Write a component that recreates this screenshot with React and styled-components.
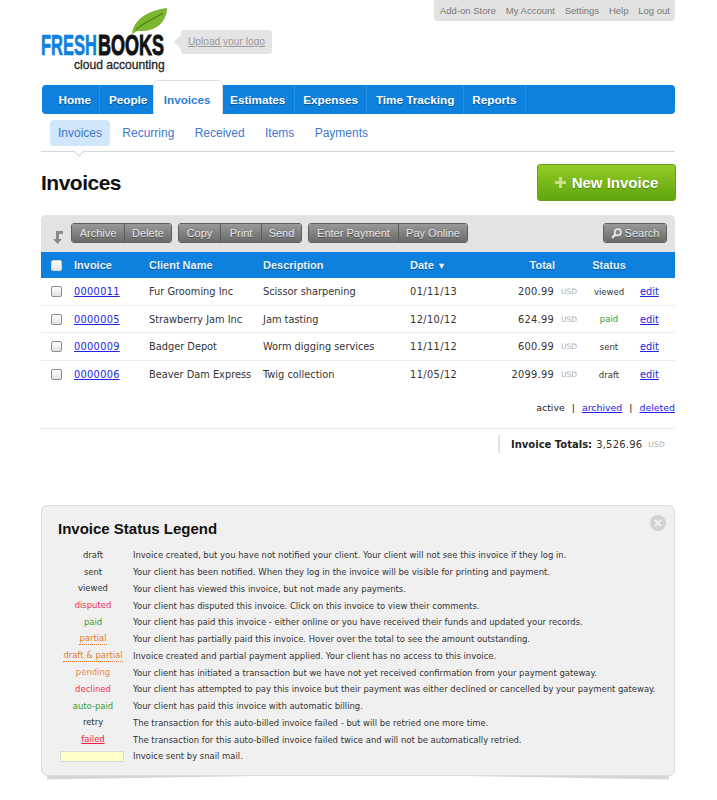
import React from "react";
import styled, { createGlobalStyle } from "styled-components";

const GlobalStyle = createGlobalStyle`
  html, body {
    margin: 0;
    padding: 0;
    background: #fff;
    color: #333;
    font-family: "DejaVu Sans", Verdana, sans-serif;
  }
`;

const Page = styled.div`
  position: relative;
  z-index: 0;
  width: 634px;
  margin-left: 41px;
  padding-bottom: 24px;
`;

// === 상단 ===
const Masthead = styled.header`
  display: flex;
  justify-content: space-between;
  align-items: flex-start;
  height: 81px;
`;

const Brand = styled.div`
  display: flex;
  align-items: flex-start;
  padding-top: 8px;
`;

const UploadTag = styled.a`
  position: relative;
  margin: 22px 0 0 14px;
  width: 91px;
  height: 24px;
  text-align: center;
  background: #e4e4e4;
  border-radius: 3px;
  color: #999;
  font: 10.2px/24px "Liberation Sans", Arial, sans-serif;
  text-decoration: underline;

  &:before {
    content: "";
    position: absolute;
    left: -7px;
    top: 5px;
    border-style: solid;
    border-width: 7px 7px 7px 0;
    border-color: transparent #e4e4e4 transparent transparent;
  }
`;

const TopLinks = styled.nav`
  display: flex;
  width: 241px;
  height: 21px;
  box-sizing: border-box;
  justify-content: space-between;
  align-items: center;
  padding: 0 5px 1px 6px;
  background: #e2e2e2;
  border-radius: 0 0 4px 4px;
`;

const TopLink = styled.a`
  font: 9.5px "Liberation Sans", Arial, sans-serif;
  color: #777;
`;

const NavBar = styled.nav`
  display: flex;
  height: 29px;
  margin-top: 4px;
  margin-left: 1px;
  padding-left: 8px;
  background: #0e80dd;
  border-radius: 4px;
`;

const NavTab = styled.a`
  display: block;
  box-sizing: border-box;
  padding: 0 ${(p) => (p.$active ? "10px" : "8.5px")};
  border-right: 1px solid ${(p) => (p.$plain ? "transparent" : "#2b8fe2")};
  color: ${(p) => (p.$active ? "#2f7fd4" : "#fff")};
  background: ${(p) => (p.$active ? "#fff" : "transparent")};
  height: ${(p) => (p.$active ? "33px" : "29px")};
  margin: ${(p) => (p.$active ? "-4px 0 0 -3px" : "0")};
  border-radius: ${(p) => (p.$active ? "4px 4px 0 0" : "0")};
  box-shadow: ${(p) => (p.$active ? "0 -1px 0 #ddd, 1px 0 0 #ddd, -1px 0 0 #ddd" : "none")};
  font: bold 11.7px "Liberation Sans", Arial, sans-serif;
  line-height: ${(p) => (p.$active ? "37px" : "29px")};
  text-shadow: ${(p) => (p.$active ? "none" : "0 1px 1px rgba(0, 0, 0, 0.35)")};
`;

const SubNav = styled.nav`
  position: relative;
  display: flex;
  gap: 4.3px;
  margin-top: 6px;
  padding: 0 0 5px 9px;
  border-bottom: 1px solid #d6d6d6;

  &:after {
    content: "";
    position: absolute;
    left: 34px;
    bottom: -4px;
    width: 7px;
    height: 7px;
    background: #fff;
    border-right: 1px solid #d6d6d6;
    border-bottom: 1px solid #d6d6d6;
    transform: rotate(45deg);
  }
`;

const SubLink = styled.a`
  height: 26px;
  padding: 0 8px;
  border-radius: 4px;
  background: ${(p) => (p.$active ? "#cfe6fb" : "transparent")};
  color: #3f78d0;
  font: 12px/26px "Liberation Sans", Arial, sans-serif;
`;

const TitleRow = styled.div`
  display: flex;
  justify-content: space-between;
  align-items: center;
  padding: 12px 0 14px;
`;

const Title = styled.h1`
  margin: 0;
  font: bold 21px "Liberation Sans", Arial, sans-serif;
  letter-spacing: -0.5px;
  color: #111;
`;

const NewButton = styled.button`
  display: flex;
  align-items: center;
  justify-content: center;
  gap: 6px;
  width: 139px;
  height: 37px;
  margin-right: -1px;
  padding: 0;
  border: 1px solid #64a318;
  border-radius: 3px;
  background: linear-gradient(#93cb25, #60a50f);
  color: #fff;
  font: bold 15px "Liberation Sans", Arial, sans-serif;
  text-shadow: 0 1px 1px rgba(0, 0, 0, 0.3);
`;

// === 툴바 ===
const Toolbar = styled.div`
  display: flex;
  align-items: flex-start;
  height: 37px;
  box-sizing: border-box;
  padding: 8px 8px 0 12px;
  background: #e3e3e3;
  border-radius: 5px 5px 0 0;
`;

const SortIcon = styled.svg`
  width: 10px;
  height: 13px;
  margin: 8px 8px 0 0;
`;

const ButtonGroup = styled.div`
  display: flex;
  height: 18px;
  margin-right: ${(p) => (p.$end ? "0" : "6px")};
  border: 1px solid #5e5e5e;
  border-radius: 3px;
  overflow: hidden;
`;

const ToolButton = styled.button`
  display: flex;
  align-items: center;
  gap: 3px;
  width: ${(p) => p.$w}px;
  padding: 0;
  justify-content: center;
  border: 0;
  border-left: ${(p) => (p.$first ? "0" : "1px solid #5c5c5c")};
  background: linear-gradient(#999, #6a6a6a);
  color: #e8e8e8;
  font: 11px "Liberation Sans", Arial, sans-serif;
  text-shadow: 0 1px 0 rgba(0, 0, 0, 0.4);
`;

const SearchSlot = styled.div`
  margin-left: auto;
`;

// === 목록 ===
const HeadRow = styled.div`
  display: grid;
  grid-template-columns: 33px 75px 114px 147px 70px 75px 25px 58px 37px;
  align-items: center;
  height: 26px;
  background: #0e80dd;
  color: #e6f2fc;
  font: bold 11px "Liberation Sans", Arial, sans-serif;
  text-shadow: 0 1px 1px rgba(0, 0, 0, 0.3);
`;

const Row = styled.div`
  display: grid;
  grid-template-columns: 33px 75px 114px 147px 70px 75px 25px 58px 37px;
  align-items: center;
  height: 27.5px;
  box-sizing: border-box;
  padding-top: 1px;
  border-bottom: ${(p) => (p.$last ? "0" : "1px solid #ececec")};
  font-size: 9.8px;
  color: #333;
`;

const Check = styled.input.attrs({ type: "checkbox" })`
  appearance: none;
  width: 11px;
  height: 11px;
  margin: 0 0 0 10px;
  border: 1px solid ${(p) => (p.$head ? "#d8d8d8" : "#8c8c8c")};
  border-radius: 2px;
  background: linear-gradient(#fff, #e2e2e2);
`;

const Cell = styled.div`
  white-space: nowrap;
  text-align: ${(p) => p.$align || "left"};
`;

const DateCell = styled(Cell)`
  letter-spacing: 0.4px;
`;

const Num = styled(Cell)`
  text-align: right;
  letter-spacing: ${(p) => (p.$head ? "0" : "0.3px")};
  padding-right: ${(p) => (p.$head ? "0" : "1px")};
`;

const Currency = styled.span`
  padding-left: 6px;
  font-size: 7.5px;
  color: #aaa;
`;

const TextLink = styled.a`
  color: #2323e6;
  text-decoration: underline;
`;

const NumberLink = styled(TextLink)`
  letter-spacing: 0.3px;
`;

const EditCell = styled.div`
  padding-left: 2px;
`;

const Status = styled(Cell)`
  text-align: center;
  font-size: 8.5px;
  color: ${(p) => p.$color || "#333"};
`;

const Filters = styled.div`
  display: flex;
  justify-content: flex-end;
  gap: 7px;
  margin-top: 13px;
  padding-bottom: 14px;
  border-bottom: 1px solid #e6e6e6;
  font-size: 9.4px;
  line-height: 13px;
  color: #222;
`;

const Totals = styled.div`
  display: flex;
  align-items: center;
  height: 18px;
  margin: 6px 8px 0 auto;
  width: 169px;
  box-sizing: border-box;
  padding-left: 11px;
  border-left: 2px solid #e2e2e2;
  font-size: 10px;
  white-space: nowrap;
  letter-spacing: 0.2px;

  strong {
    margin-right: 4px;
    color: #222;
    letter-spacing: 0;
  }
`;

// === 범례 ===
const Legend = styled.section`
  position: relative;
  margin-top: 52px;
  height: 271px;
  box-sizing: border-box;
  padding: 14px 18px 0 16px;
  background: #f0f0f0;
  border: 1px solid #dedede;
  border-radius: 6px;

  &:before,
  &:after {
    content: "";
    position: absolute;
    z-index: -1;
    bottom: -2px;
    width: 300px;
    height: 10px;
    background: #d6d6d6;
  }

  &:before {
    left: 5px;
    transform: rotate(-1deg);
  }

  &:after {
    right: 5px;
    transform: rotate(1deg);
  }
`;

const LegendTitle = styled.h2`
  margin: 0 0 9px;
  font: bold 15px/18px "Liberation Sans", Arial, sans-serif;
  color: #111;
`;

const CloseIcon = styled.svg`
  position: absolute;
  top: 9px;
  right: 8px;
  width: 16px;
  height: 16px;
`;

const LegendRow = styled.div`
  display: grid;
  grid-template-columns: 66px 1fr;
  column-gap: 7px;
  align-items: center;
  margin-left: 2px;
  height: 16.75px;
  font-size: 8.45px;
  color: #333;
  white-space: nowrap;
`;

const LegendLabel = styled.div`
  justify-self: center;
  color: ${(p) => p.$color || "#333"};
  line-height: 11px;
  border-bottom: ${(p) => (p.$dotted ? `1px dotted ${p.$color}` : "0")};
  text-decoration: ${(p) => (p.$under ? "underline" : "none")};
`;

const SnailBox = styled.div`
  width: 62px;
  height: 9px;
  background: #ffffc8;
  border: 1px solid #dcdcdc;
`;

const invoices = [
  { no: "0000011", client: "Fur Grooming Inc", desc: "Scissor sharpening", date: "01/11/13", total: "200.99", status: "viewed" },
  { no: "0000005", client: "Strawberry Jam Inc", desc: "Jam tasting", date: "12/10/12", total: "624.99", status: "paid", color: "#3a9a30" },
  { no: "0000009", client: "Badger Depot", desc: "Worm digging services", date: "11/11/12", total: "600.99", status: "sent" },
  { no: "0000006", client: "Beaver Dam Express", desc: "Twig collection", date: "11/05/12", total: "2099.99", status: "draft" },
];

const legend = [
  { label: "draft", text: "Invoice created, but you have not notified your client. Your client will not see this invoice if they log in." },
  { label: "sent", text: "Your client has been notified. When they log in the invoice will be visible for printing and payment." },
  { label: "viewed", text: "Your client has viewed this invoice, but not made any payments." },
  { label: "disputed", color: "#f0305a", text: "Your client has disputed this invoice. Click on this invoice to view their comments." },
  { label: "paid", color: "#3a9a30", text: "Your client has paid this invoice - either online or you have received their funds and updated your records." },
  { label: "partial", color: "#e07b30", dotted: true, text: "Your client has partially paid this invoice. Hover over the total to see the amount outstanding." },
  { label: "draft & partial", color: "#e07b30", dotted: true, text: "Invoice created and partial payment applied. Your client has no access to this invoice." },
  { label: "pending", color: "#ea8a45", text: "Your client has initiated a transaction but we have not yet received confirmation from your payment gateway." },
  { label: "declined", color: "#f0305a", text: "Your client has attempted to pay this invoice but their payment was either declined or cancelled by your payment gateway." },
  { label: "auto-paid", color: "#3a9a30", text: "Your client has paid this invoice with automatic billing." },
  { label: "retry", text: "The transaction for this auto-billed invoice failed - but will be retried one more time." },
  { label: "failed", color: "#ee2040", under: true, text: "The transaction for this auto-billed invoice failed twice and will not be automatically retried." },
];

const Logo = () => (
  <svg width="126" height="66" viewBox="0 0 126 66">
    <path d="M91 26 C93 11 106 3 126 0 C126 13 116 23 101 23 C97 23 95 23 93 25 Z" fill="#7cb82f" />
    <path d="M95 22 C102 14 112 12 122 5" stroke="#4d7d1a" strokeWidth="1.2" fill="none" />
    <g fontFamily="Liberation Sans, Arial, sans-serif" fontWeight="bold">
      <text transform="translate(0 47) scale(0.55 1)" fontSize="30" fill="#0e80dd" stroke="#0e80dd" strokeWidth="0.7">FRESH</text>
      <text transform="translate(57 47) scale(0.6 1)" fontSize="30" fill="#111" stroke="#111" strokeWidth="1">BOOKS</text>
      <text transform="translate(33 61) scale(0.93 1)" fontSize="13" fill="#222" fontWeight="normal" stroke="#222" strokeWidth="0.3">cloud accounting</text>
    </g>
  </svg>
);

const App = () => (
  <>
    <GlobalStyle />
    <Page>
      <Masthead>
        <Brand>
          <Logo />
          <UploadTag>Upload your logo</UploadTag>
        </Brand>
        <TopLinks>
          {["Add-on Store", "My Account", "Settings", "Help", "Log out"].map((l) => (
            <TopLink key={l}>{l}</TopLink>
          ))}
        </TopLinks>
      </Masthead>

      <NavBar>
        <NavTab>Home</NavTab>
        <NavTab $plain>People</NavTab>
        <NavTab $active $plain>Invoices</NavTab>
        <NavTab>Estimates</NavTab>
        <NavTab>Expenses</NavTab>
        <NavTab>Time Tracking</NavTab>
        <NavTab>Reports</NavTab>
      </NavBar>

      <SubNav>
        <SubLink $active>Invoices</SubLink>
        <SubLink>Recurring</SubLink>
        <SubLink>Received</SubLink>
        <SubLink>Items</SubLink>
        <SubLink>Payments</SubLink>
      </SubNav>

      <TitleRow>
        <Title>Invoices</Title>
        <NewButton>
          <svg width="11" height="11" viewBox="0 0 11 11">
            <path d="M4 0h3v4h4v3H7v4H4V7H0V4h4z" fill="#c6e08c" />
          </svg>
          New Invoice
        </NewButton>
      </TitleRow>

      <Toolbar>
        <SortIcon viewBox="0 0 10 13">
          <path d="M3 0h7v3H6v5h3l-4.5 5L0 8h3z" fill="#8a8a8a" />
        </SortIcon>
        <ButtonGroup>
          <ToolButton $first $w={52}>Archive</ToolButton>
          <ToolButton $w={47}>Delete</ToolButton>
        </ButtonGroup>
        <ButtonGroup>
          <ToolButton $first $w={41}>Copy</ToolButton>
          <ToolButton $w={41}>Print</ToolButton>
          <ToolButton $w={40}>Send</ToolButton>
        </ButtonGroup>
        <ButtonGroup>
          <ToolButton $first $w={89}>Enter Payment</ToolButton>
          <ToolButton $w={69}>Pay Online</ToolButton>
        </ButtonGroup>
        <SearchSlot>
          <ButtonGroup $end>
            <ToolButton $first $w={62}>
              <svg width="11" height="11" viewBox="0 0 10 10">
                <circle cx="6.2" cy="3.8" r="2.8" fill="none" stroke="#e6e6e6" strokeWidth="1.6" />
                <path d="M4.2 5.8 L1 9" stroke="#e6e6e6" strokeWidth="2" />
              </svg>
              Search
            </ToolButton>
          </ButtonGroup>
        </SearchSlot>
      </Toolbar>

      <HeadRow>
        <Check $head />
        <Cell>Invoice</Cell>
        <Cell>Client Name</Cell>
        <Cell>Description</Cell>
        <Cell>Date <small>▼</small></Cell>
        <Num $head>Total</Num>
        <span />
        <Cell $align="center">Status</Cell>
        <span />
      </HeadRow>

      {invoices.map((inv, i) => (
        <Row key={inv.no} $last={i === invoices.length - 1}>
          <Check />
          <Cell><NumberLink>{inv.no}</NumberLink></Cell>
          <Cell>{inv.client}</Cell>
          <Cell>{inv.desc}</Cell>
          <DateCell>{inv.date}</DateCell>
          <Num>{inv.total}</Num>
          <Currency>USD</Currency>
          <Status $color={inv.color}>{inv.status}</Status>
          <EditCell><TextLink>edit</TextLink></EditCell>
        </Row>
      ))}

      <Filters>
        <span>active</span>
        <span>|</span>
        <TextLink>archived</TextLink>
        <span>|</span>
        <TextLink>deleted</TextLink>
      </Filters>

      <Totals>
        <strong>Invoice Totals:</strong> 3,526.96
        <Currency>USD</Currency>
      </Totals>

      <Legend>
        <LegendTitle>Invoice Status Legend</LegendTitle>
        <CloseIcon viewBox="0 0 16 16">
          <circle cx="8" cy="8" r="8" fill="#d2d2d2" />
          <path d="M5 5l6 6M11 5l-6 6" stroke="#f0f0f0" strokeWidth="2" />
        </CloseIcon>
        {legend.map((item) => (
          <LegendRow key={item.label}>
            <LegendLabel $color={item.color} $dotted={item.dotted} $under={item.under}>
              {item.label}
            </LegendLabel>
            <div>{item.text}</div>
          </LegendRow>
        ))}
        <LegendRow>
          <SnailBox />
          <div>Invoice sent by snail mail.</div>
        </LegendRow>
      </Legend>
    </Page>
  </>
);

export default App;
